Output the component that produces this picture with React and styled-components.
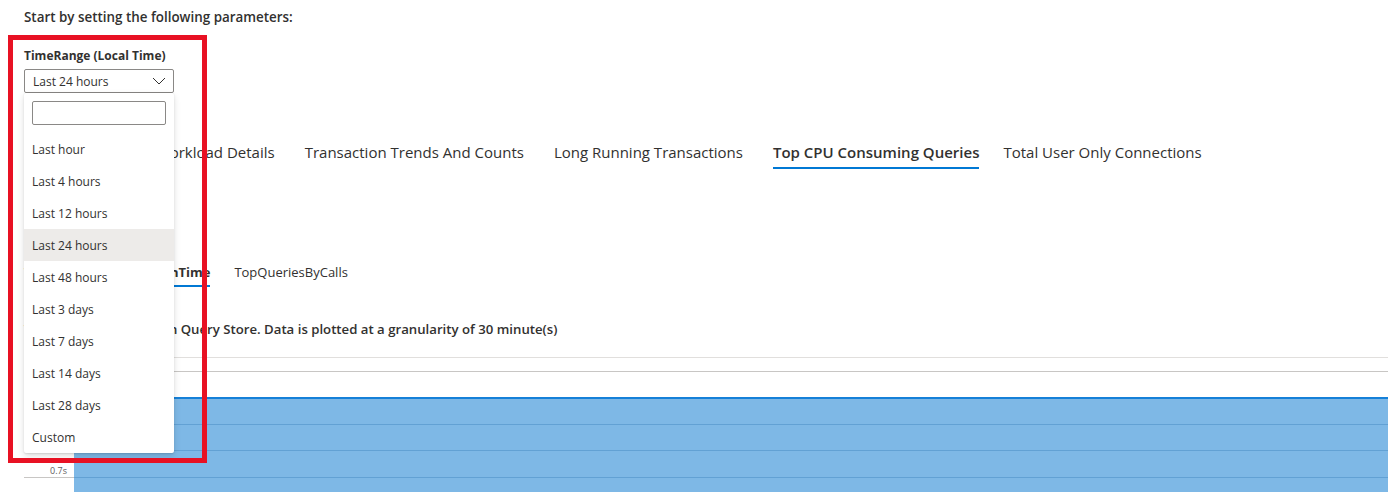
import styled, { createGlobalStyle } from "styled-components";

const GlobalStyle = createGlobalStyle`
  html, body {
    margin: 0;
    padding: 0;
    background: #ffffff;
    overflow: hidden;
  }
  body {
    font-family: "Open Sans", "Noto Sans", sans-serif;
    color: #323130;
  }
`;

const Page = styled.div`
  position: relative;
  width: 1388px;
  height: 492px;
  padding: 8px 0 0 24px;
  box-sizing: border-box;
  overflow: hidden;
`;

const Intro = styled.div`
  font-size: 13.4px;
  font-weight: 600;
  line-height: 18px;
`;

const Param = styled.div`
  position: relative;
  margin-top: 21px;
  width: 150px;
`;

const Label = styled.div`
  font-size: 12px;
  font-weight: 700;
  line-height: 18px;
  margin-bottom: 4px;
`;

const Select = styled.div`
  display: flex;
  align-items: center;
  justify-content: space-between;
  height: 24px;
  box-sizing: border-box;
  border: 1px solid #8a8886;
  border-radius: 2px;
  padding: 0 7px 0 8px;
  font-size: 12px;
`;

const Menu = styled.div`
  position: absolute;
  top: 46px;
  left: 0;
  width: 150px;
  background: #fff;
  border-radius: 2px;
  box-shadow: 0 3px 7px rgba(0, 0, 0, 0.13), 0 0.6px 1.8px rgba(0, 0, 0, 0.11);
  padding-top: 8px;
  z-index: 5;
`;

const Search = styled.div`
  margin: 0 8px 8px;
  height: 24px;
  box-sizing: border-box;
  border: 1px solid #8a8886;
  border-radius: 2px;
`;

const Option = styled.div`
  height: 32px;
  display: flex;
  align-items: center;
  padding: 0 8px;
  font-size: 12px;
  background: ${(p) => (p.$selected ? "#edebe9" : "transparent")};
`;

const Callout = styled.div`
  position: absolute;
  left: 8px;
  top: 35px;
  width: 199px;
  height: 428px;
  box-sizing: border-box;
  border: 5px solid #e81123;
  z-index: 6;
  pointer-events: none;
`;

const Tabs = styled.div`
  display: flex;
  gap: 30px;
  margin-top: 49px;
`;

const Tab = styled.div`
  font-size: 15px;
  line-height: 20px;
  padding-bottom: 5px;
  font-weight: ${(p) => (p.$active ? 600 : 400)};
  border-bottom: 2px solid ${(p) => (p.$active ? "#0078d4" : "transparent")};
  margin-right: ${(p) => (p.$active ? "-6px" : "0")};
  white-space: nowrap;
`;

const SubTabs = styled.div`
  display: flex;
  gap: 24px;
  margin-top: 94px;
`;

const SubTab = styled.div`
  font-size: 13px;
  line-height: 18px;
  padding-bottom: 4px;
  font-weight: ${(p) => (p.$active ? 700 : 400)};
  border-bottom: 2px solid ${(p) => (p.$active ? "#0078d4" : "transparent")};
  white-space: nowrap;
`;

const Caption = styled.div`
  margin-top: 33px;
  font-size: 13.2px;
  font-weight: 600;
  line-height: 18px;
  white-space: nowrap;
`;

const Chart = styled.div`
  margin-top: 19px;
`;

const Rule = styled.div`
  height: 1px;
  background: ${(p) => p.$color};
  margin-bottom: ${(p) => p.$gap}px;
`;

const PlotRow = styled.div`
  display: grid;
  grid-template-columns: 50px 1fr;
  height: ${(p) => p.$h}px;
`;

const AxisCell = styled.div`
  display: flex;
  align-items: flex-end;
  justify-content: flex-end;
  padding-right: 7px;
  border-bottom: 1px solid #c8c6c4;
  font-size: 9px;
  line-height: 12px;
  color: #605e5c;
`;

const PlotCell = styled.div`
  background: #7eb8e6;
  border-bottom: 1px solid #62a1d4;
  border-top: ${(p) => (p.$first ? "2px solid #1580d8" : "none")};
`;

const Chevron = () => (
  <svg width="14" height="8" viewBox="0 0 14 8" fill="none">
    <path d="M1 1l6 6 6-6" stroke="#323130" strokeWidth="1" />
  </svg>
);

const options = [
  "Last hour",
  "Last 4 hours",
  "Last 12 hours",
  "Last 24 hours",
  "Last 48 hours",
  "Last 3 days",
  "Last 7 days",
  "Last 14 days",
  "Last 28 days",
  "Custom",
];

const tabs = [
  "Data Overview",
  "Workload Details",
  "Transaction Trends And Counts",
  "Long Running Transactions",
  "Top CPU Consuming Queries",
  "Total User Only Connections",
];

const rows = [
  { h: 28, label: "0.9s", first: true },
  { h: 26, label: "0.8s" },
  { h: 27, label: "0.7s" },
  { h: 26, label: "" },
];

export default function App() {
  return (
    <>
      <GlobalStyle />
      <Page>
        <Intro>Start by setting the following parameters:</Intro>
        <Param>
          <Label>TimeRange (Local Time)</Label>
          <Select>
            <span>Last 24 hours</span>
            <Chevron />
          </Select>
          <Menu>
            <Search />
            {options.map((o) => (
              <Option key={o} $selected={o === "Last 24 hours"}>
                {o}
              </Option>
            ))}
          </Menu>
        </Param>

        <Tabs>
          {tabs.map((t) => (
            <Tab key={t} $active={t === "Top CPU Consuming Queries"}>
              {t}
            </Tab>
          ))}
        </Tabs>

        <SubTabs>
          <SubTab $active>TopQueriesByExecutionTime</SubTab>
          <SubTab>TopQueriesByCalls</SubTab>
        </SubTabs>

        <Caption>
          Top CPU queries seen in Query Store. Data is plotted at a
          granularity of 30 minute(s)
        </Caption>

        <Chart>
          <Rule $color="#e1dfdd" $gap={13} />
          <Rule $color="#c8c6c4" $gap={25} />
          {rows.map((r, i) => (
            <PlotRow key={i} $h={r.h}>
              <AxisCell>{r.label}</AxisCell>
              <PlotCell $first={r.first} />
            </PlotRow>
          ))}
        </Chart>

        <Callout />
      </Page>
    </>
  );
}
